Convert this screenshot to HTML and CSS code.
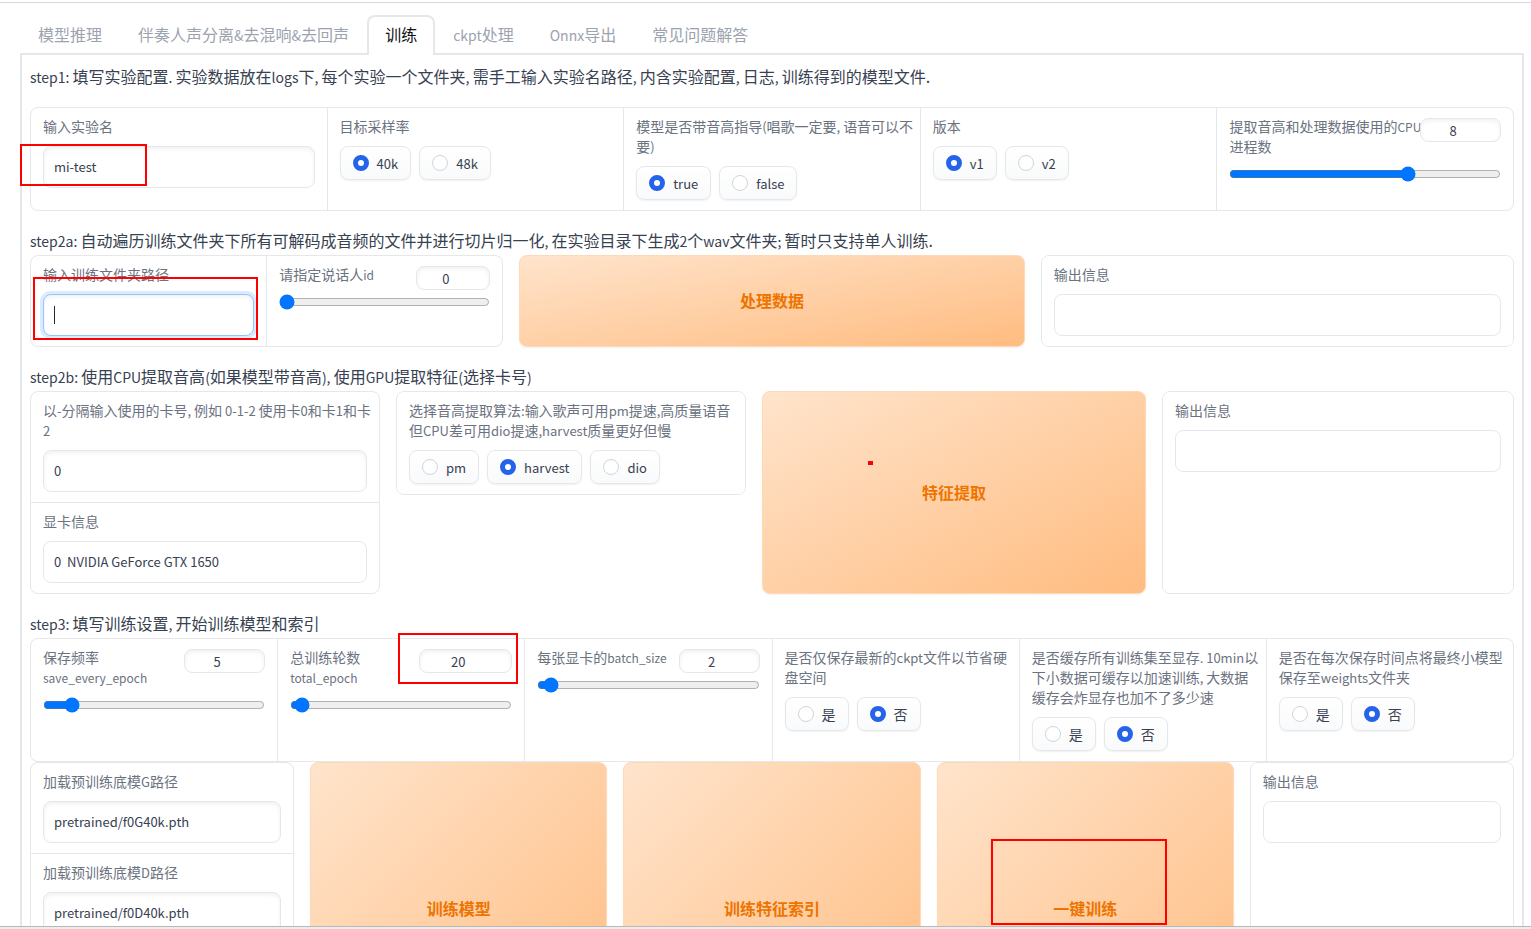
FILE: index.html
```html
<!DOCTYPE html>
<html lang="zh-CN">
<head>
<meta charset="utf-8">
<title>训练</title>
<link rel="stylesheet" href="styles.css">
</head>
<body>
<div class="viewport">
<main class="page">
  <nav class="tabs" role="tablist">
    <button class="tab" role="tab">模型推理</button>
    <button class="tab" role="tab">伴奏人声分离<span class="en">&amp;</span>去混响<span class="en">&amp;</span>去回声</button>
    <button class="tab selected" role="tab" aria-selected="true">训练</button>
    <button class="tab" role="tab"><span class="en">ckpt</span>处理</button>
    <button class="tab" role="tab"><span class="en">Onnx</span>导出</button>
    <button class="tab" role="tab">常见问题解答</button>
  </nav>
  <section class="panel">
    <p class="step first"><span class="en">step1: </span>填写实验配置<span class="en">. </span>实验数据放在<span class="en">logs</span>下<span class="en">, </span>每个实验一个文件夹<span class="en">, </span>需手工输入实验名路径<span class="en">, </span>内含实验配置<span class="en">, </span>日志<span class="en">, </span>训练得到的模型文件.</p>
    <div class="group five">
      <div class="cell">
        <label class="label" for="exp">输入实验名</label>
        <input class="text" id="exp" type="text" value="mi-test">
      </div>
      <fieldset class="cell">
        <legend class="label">目标采样率</legend>
        <div class="options">
          <label class="option"><input type="radio" name="sr" checked>40k</label>
          <label class="option"><input type="radio" name="sr">48k</label>
        </div>
      </fieldset>
      <fieldset class="cell">
        <legend class="label">模型是否带音高指导<span class="en">(</span>唱歌一定要<span class="en">, </span>语音可以不要<span class="en">)</span></legend>
        <div class="options">
          <label class="option"><input type="radio" name="f0" checked>true</label>
          <label class="option"><input type="radio" name="f0">false</label>
        </div>
      </fieldset>
      <fieldset class="cell">
        <legend class="label">版本</legend>
        <div class="options">
          <label class="option"><input type="radio" name="ver" checked>v1</label>
          <label class="option"><input type="radio" name="ver">v2</label>
        </div>
      </fieldset>
      <div class="cell">
        <div class="slider-head">
          <label class="label" for="cpu">提取音高和处理数据使用的<span class="en">CPU</span>进程数</label>
          <input class="number" id="cpu" type="number" value="8">
        </div>
        <input class="range" type="range" min="0" max="12" value="8" aria-label="CPU进程数">
      </div>
    </div>

    <p class="step"><span class="en">step2a: </span>自动遍历训练文件夹下所有可解码成音频的文件并进行切片归一化<span class="en">, </span>在实验目录下生成<span class="en">2</span>个<span class="en">wav</span>文件夹<span class="en">; </span>暂时只支持单人训练.</p>
    <div class="row row-process">
      <div class="group two">
        <div class="cell">
          <label class="label" for="dir">输入训练文件夹路径</label>
          <div class="focused"><input class="text" id="dir" type="text"></div>
        </div>
        <div class="cell">
          <div class="slider-head">
            <label class="label" for="spk">请指定说话人<span class="en">id</span></label>
            <input class="number narrow" id="spk" type="number" value="0">
          </div>
          <input class="range" type="range" min="0" max="4" value="0" aria-label="说话人id">
        </div>
      </div>
      <button class="action">处理数据</button>
      <div class="group">
        <div class="cell">
          <label class="label" for="out1">输出信息</label>
          <input class="text plain" id="out1" type="text" readonly>
        </div>
      </div>
    </div>

    <p class="step"><span class="en">step2b: </span>使用<span class="en">CPU</span>提取音高<span class="en">(</span>如果模型带音高<span class="en">), </span>使用<span class="en">GPU</span>提取特征<span class="en">(</span>选择卡号<span class="en">)</span></p>
    <div class="row row-feature">
      <div class="group stack">
        <div class="cell">
          <label class="label" for="cards">以<span class="en">-</span>分隔输入使用的卡号<span class="en">, </span>例如<span class="en"> 0-1-2 </span>使用卡<span class="en">0</span>和卡<span class="en">1</span>和卡<span class="en">2</span></label>
          <input class="text" id="cards" type="text" value="0">
        </div>
        <div class="cell">
          <label class="label" for="gpu">显卡信息</label>
          <input class="text plain" id="gpu" type="text" value="0  NVIDIA GeForce GTX 1650" readonly>
        </div>
      </div>
      <div class="group top">
        <fieldset class="cell">
          <legend class="label">选择音高提取算法<span class="en">:</span>输入歌声可用<span class="en">pm</span>提速<span class="en">,</span>高质量语音但<span class="en">CPU</span>差可用<span class="en">dio</span>提速<span class="en">,harvest</span>质量更好但慢</legend>
          <div class="options">
            <label class="option"><input type="radio" name="algo">pm</label>
            <label class="option"><input type="radio" name="algo" checked>harvest</label>
            <label class="option"><input type="radio" name="algo">dio</label>
          </div>
        </fieldset>
      </div>
      <button class="action">特征提取</button>
      <div class="group">
        <div class="cell">
          <label class="label" for="out2">输出信息</label>
          <input class="text plain" id="out2" type="text" readonly>
        </div>
      </div>
    </div>

    <p class="step"><span class="en">step3: </span>填写训练设置<span class="en">, </span>开始训练模型和索引</p>
    <div class="group six">
      <div class="cell">
        <div class="slider-head">
          <label class="label" for="save">保存频率<span class="en"> save_every_epoch</span></label>
          <input class="number" id="save" type="number" value="5">
        </div>
        <input class="range" type="range" min="0" max="50" value="5" aria-label="save_every_epoch">
      </div>
      <div class="cell">
        <div class="slider-head">
          <label class="label" for="total">总训练轮数<span class="en"> total_epoch</span></label>
          <input class="number wide" id="total" type="number" value="20">
        </div>
        <input class="range" type="range" min="0" max="1000" value="20" aria-label="total_epoch">
      </div>
      <div class="cell">
        <div class="slider-head">
          <label class="label" for="batch">每张显卡的<span class="en">batch_size</span></label>
          <input class="number" id="batch" type="number" value="2">
        </div>
        <input class="range" type="range" min="1" max="40" value="2" aria-label="batch_size">
      </div>
      <fieldset class="cell">
        <legend class="label">是否仅保存最新的<span class="en">ckpt</span>文件以节省硬盘空间</legend>
        <div class="options">
          <label class="option zh"><input type="radio" name="latest">是</label>
          <label class="option zh"><input type="radio" name="latest" checked>否</label>
        </div>
      </fieldset>
      <fieldset class="cell">
        <legend class="label">是否缓存所有训练集至显存<span class="en">. 10min</span>以下小数据可缓存以加速训练<span class="en">, </span>大数据缓存会炸显存也加不了多少速</legend>
        <div class="options">
          <label class="option zh"><input type="radio" name="cache">是</label>
          <label class="option zh"><input type="radio" name="cache" checked>否</label>
        </div>
      </fieldset>
      <fieldset class="cell">
        <legend class="label">是否在每次保存时间点将最终小模型保存至<span class="en">weights</span>文件夹</legend>
        <div class="options">
          <label class="option zh"><input type="radio" name="weights">是</label>
          <label class="option zh"><input type="radio" name="weights" checked>否</label>
        </div>
      </fieldset>
    </div>

    <div class="row row-train">
      <div class="group stack">
        <div class="cell">
          <label class="label" for="g">加载预训练底模<span class="en">G</span>路径</label>
          <input class="text" id="g" type="text" value="pretrained/f0G40k.pth">
        </div>
        <div class="cell">
          <label class="label" for="d">加载预训练底模<span class="en">D</span>路径</label>
          <input class="text" id="d" type="text" value="pretrained/f0D40k.pth">
        </div>
      </div>
      <button class="action">训练模型</button>
      <button class="action">训练特征索引</button>
      <button class="action">一键训练</button>
      <div class="group">
        <div class="cell">
          <label class="label" for="out3">输出信息</label>
          <input class="text plain" id="out3" type="text" readonly>
        </div>
      </div>
    </div>
  </section>
  <div class="mark mark-name"></div>
  <div class="mark mark-dir"></div>
  <div class="mark mark-epoch"></div>
  <div class="mark mark-train"></div>
  <div class="mark mark-dot"></div>
</main>
<div class="bottom-bar"></div>
</div>
</body>
</html>
```
FILE: styles.css
```css
* { box-sizing: border-box; }

body {
  margin: 0;
  background: #fff;
  color: #374151;
  font-family: "Noto Sans CJK SC", sans-serif;
  font-size: 14px;
}

button, input { font-family: inherit; }

.viewport {
  display: flex;
  flex-direction: column;
  height: 100vh;
  overflow: hidden;
}

.page {
  position: relative;
  flex: 1;
  min-height: 0;
  overflow: hidden;
  padding: 15px 7px 0 20px;
}
.page::before {
  content: "";
  position: absolute;
  top: 2px;
  left: 0;
  right: 0;
  height: 1px;
  background: #d9d9dc;
}

.bottom-bar {
  height: 3px;
  background: #ececec;
  border-top: 1px solid #b9b9b9;
}

/* tabs */
.tabs {
  display: flex;
  height: 40px;
  border-bottom: 2px solid #e5e7eb;
}
.tab {
  height: 40px;
  padding: 0 16px 4px;
  border: 2px solid transparent;
  border-bottom: 0;
  border-radius: 8px 8px 0 0;
  background: none;
  color: #9ca3af;
  font-size: 16px;
  line-height: 24px;
}
.tab.selected {
  background: #fff;
  border-color: #e5e7eb;
  color: #111;
}
.tab .en { font-size: 14px; line-height: 14px; }

.panel {
  padding: 9px 8px;
  border: 2px solid #e5e7eb;
  border-top: 0;
}

.step {
  margin: 17px 0 3px;
  font-size: 16px;
  line-height: 24px;
}
.step.first { margin: 0 0 19px; }
.step .en { white-space: pre-wrap; font-size: 14px; line-height: 14px; }

/* rows and cards */
.row { display: grid; gap: 16px; }
.row-process { grid-template-columns: 473fr 505fr 473fr; }
.row-feature { grid-template-columns: 350fr 350fr 384fr 352fr; }
.row-train { grid-template-columns: 264fr 297fr 297fr 297fr 264fr; min-height: 294px; }

.group {
  display: grid;
  gap: 1px;
  border: 1px solid #e5e7eb;
  border-radius: 8px;
  background: #e5e7eb;
  overflow: hidden;
}
.group.two { grid-template-columns: repeat(2, minmax(0, 1fr)); }
.group.five { grid-template-columns: repeat(5, minmax(0, 1fr)); }
.group.six { grid-template-columns: repeat(6, minmax(0, 1fr)); }
.group.stack { grid-template-rows: auto 1fr; }
.group.top { align-self: start; }

.cell {
  min-width: 0;
  margin: 0;
  padding: 8px 12px 10px;
  border: 0;
  background: #fff;
}

.label {
  display: block;
  margin: 0 -6px 10px 0;
  padding: 0;
  color: #6b7280;
  font-size: 14px;
  line-height: 20px;
}
legend.label {
  float: left;
  width: calc(100% + 6px);
}
.label .en { font-size: 13px; line-height: 13px; }

.text {
  display: block;
  width: 100%;
  height: 42px;
  padding: 0 10px 2px;
  border: 1px solid #e5e7eb;
  border-radius: 8px;
  background: #fff;
  box-shadow: inset 0 2px 4px rgba(0, 0, 0, 0.06);
  color: #374151;
  font-size: 13px;
  outline: none;
}
.text.plain { box-shadow: none; white-space: pre; }

.focused { position: relative; }
.focused .text {
  border-color: #93c5fd;
  box-shadow: 0 0 0 3px #dbeafe, inset 0 2px 4px rgba(0, 0, 0, 0.06);
}
.focused::after {
  content: "";
  position: absolute;
  top: 12px;
  left: 11px;
  width: 1px;
  height: 18px;
  background: #1f2937;
}

/* radios */
.options {
  display: flex;
  flex-wrap: wrap;
  gap: 8px;
  clear: both;
}
.option {
  display: flex;
  align-items: center;
  gap: 8px;
  height: 34px;
  padding: 0 12px;
  border: 1px solid #e5e7eb;
  border-radius: 8px;
  background: linear-gradient(to bottom, #fff, #f9fafb);
  box-shadow: 0 1px 2px rgba(0, 0, 0, 0.06);
  font-size: 13px;
}
.option.zh { font-size: 14px; }
.option input {
  appearance: none;
  width: 16px;
  height: 16px;
  margin: 0;
  border: 1px solid #d1d5db;
  border-radius: 50%;
  background: #fff;
}
.option input:checked {
  border: 5px solid #2563eb;
}

/* sliders */
.slider-head {
  display: flex;
  justify-content: space-between;
  align-items: flex-start;
  margin-bottom: 10px;
}
.slider-head .label { flex: 1; min-width: 0; margin: 0 -2px 0 0; }
.slider-head .en { font-size: 12px; }
.number {
  flex: none;
  width: 81px;
  height: 24px;
  margin: 2px 0 -6px;
  padding: 0 8px;
  border: 1px solid #e5e7eb;
  border-radius: 8px;
  background: #fff;
  box-shadow: inset 0 2px 4px rgba(0, 0, 0, 0.06);
  color: #374151;
  font-size: 13px;
  text-align: center;
}
.number.narrow { width: 74px; }
.number.wide { width: 93px; }
.range {
  display: block;
  width: 100%;
  height: 16px;
  margin: 0;
}

.action {
  padding: 8px 16px 10px;
  border: 1px solid #ffd8b4;
  border-radius: 8px;
  background: linear-gradient(to bottom right, #ffe4cc, #ffbc80);
  box-shadow: 0 1px 2px rgba(0, 0, 0, 0.05);
  color: #ee7400;
  font-size: 16px;
  font-weight: 700;
}

/* red annotations drawn over the form */
.mark { position: absolute; border: 2px solid #f00; pointer-events: none; }
.mark-name { left: 20px; top: 144px; width: 127px; height: 42px; }
.mark-dir { left: 33px; top: 277px; width: 225px; height: 63px; }
.mark-epoch { left: 398px; top: 633px; width: 120px; height: 51px; }
.mark-train { left: 991px; top: 839px; width: 176px; height: 86px; }
.mark-dot { left: 868px; top: 461px; width: 5px; height: 4px; }
```
